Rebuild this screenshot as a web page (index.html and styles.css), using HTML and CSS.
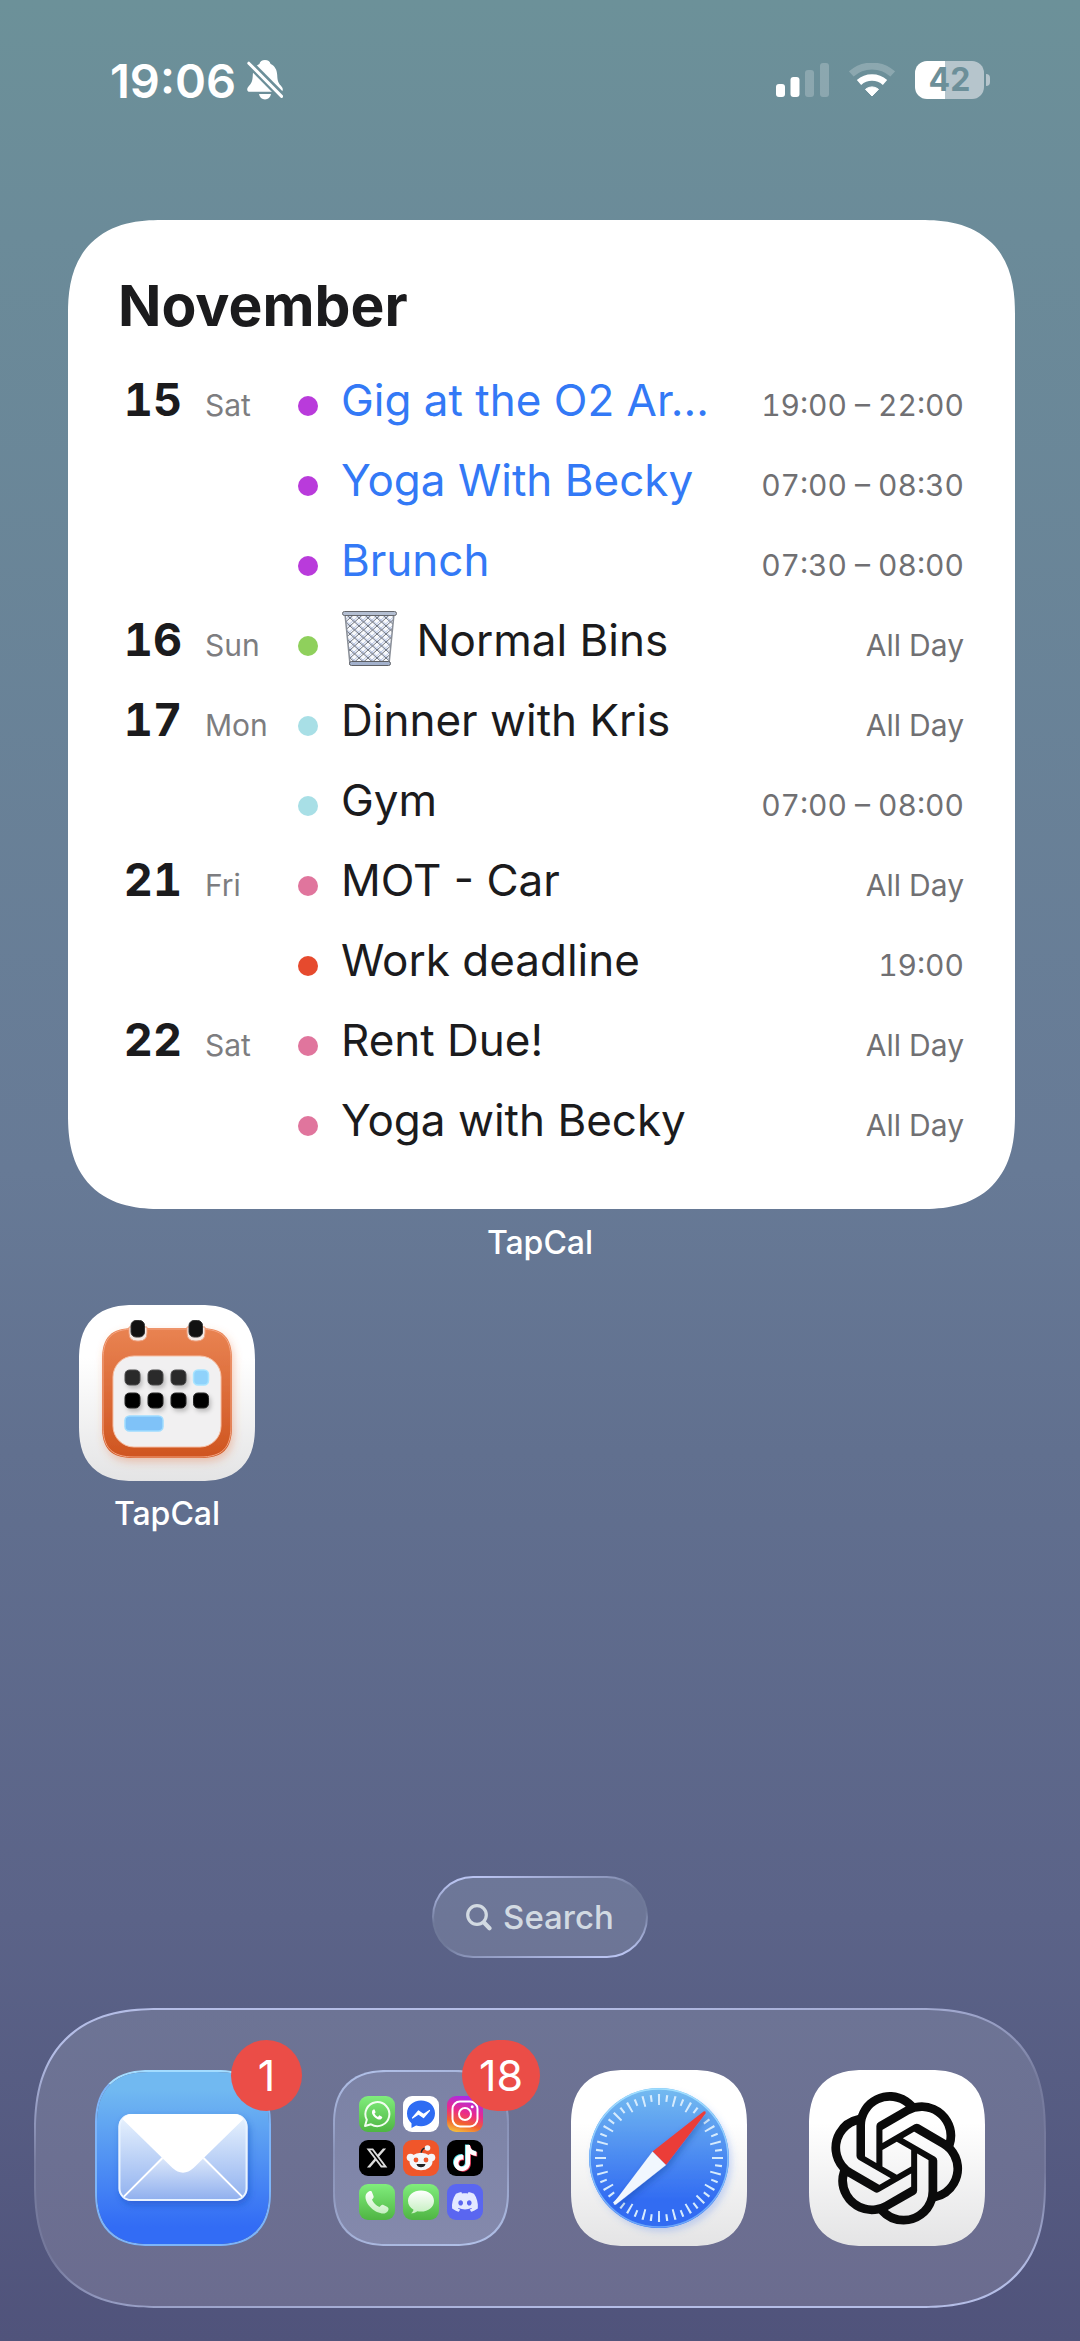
FILE: index.html
```html
<!DOCTYPE html>
<html lang="en">
<head>
    <meta charset="UTF-8">
    <meta name="viewport" content="width=device-width, initial-scale=1">
    <title>Home Screen</title>
    <link rel="stylesheet" href="styles.css">
</head>
<body>
    <header class="status-bar">
        <div class="status-left">
            <time class="clock">19:06</time>
            <svg class="bell" width="36" height="40" viewBox="0 0 36 40" aria-label="Silent mode">
                <defs>
                    <mask id="bell-mask">
                        <rect width="36" height="40" fill="#fff"/>
                        <path d="M-2 -1 L38 39.500" stroke="#000" stroke-width="8"/>
                    </mask>
                </defs>
                <g mask="url(#bell-mask)" fill="#fff">
                    <path d="M18 0c-3 0-5 1.600-5.600 4C8 6 6 10 5.800 15c-.2 6-1.200 8-3.300 10.200C1 26.800.2 28 .2 29.500c0 1.400 1 2.300 2.600 2.300h30.400c1.600 0 2.600-.9 2.600-2.300 0-1.500-.8-2.700-2.300-4.300-2.100-2.200-3.100-4.200-3.300-10.200C30 10 28 6 23.600 4 23 1.600 21 0 18 0z"/>
                    <path d="M12 34h12c-.6 3.300-2.800 5.400-6 5.400s-5.400-2.100-6-5.400z"/>
                </g>
                <path d="M1.800 3.200 L34.600 36.400" stroke="#fff" stroke-width="3" stroke-linecap="round"/>
            </svg>
        </div>
        <div class="status-right">
            <svg width="53" height="34" viewBox="0 0 53 34" fill="#fff" aria-label="Signal">
                <rect x="0" y="21" width="9" height="13" rx="3"/>
                <rect x="14.500" y="14" width="9" height="20" rx="3"/>
                <rect x="29" y="7" width="9" height="27" rx="3" opacity=".22"/>
                <rect x="44" y="0" width="9" height="34" rx="3" opacity=".22"/>
            </svg>
            <svg width="46" height="34" viewBox="0 0 46 34" fill="none" stroke="#fff" aria-label="Wi-Fi">
                <path d="M2.300 11a31 31 0 0 1 41.400 0" stroke-width="7" opacity=".22"/>
                <path d="M10 19.500a19.500 19.500 0 0 1 26 0" stroke-width="6.500"/>
                <path d="M16.500 26.300a10 10 0 0 1 13 0L23 33z" fill="#fff" stroke-width="1" stroke-linejoin="round"/>
            </svg>
            <div class="battery"><span class="battery-body">42</span><span class="battery-tip"></span></div>
        </div>
    </header>

    <main>
        <section class="widget">
            <h1>November</h1>
            <ul class="agenda">
                <li>
                    <span class="day">15</span><span class="weekday">Sat</span>
                    <span class="dot purple"></span><span class="title blue">Gig at the O2 Ar...</span><span class="time">19:00 – 22:00</span>
                </li>
                <li>
                    <span class="dot purple"></span><span class="title blue">Yoga With Becky</span><span class="time">07:00 – 08:30</span>
                </li>
                <li>
                    <span class="dot purple"></span><span class="title blue">Brunch</span><span class="time">07:30 – 08:00</span>
                </li>
                <li>
                    <span class="day">16</span><span class="weekday">Sun</span>
                    <span class="dot green"></span>
                    <span class="title">
                        <svg class="bin" width="57" height="57" viewBox="0 0 57 57" aria-hidden="true">
                            <defs>
                                <pattern id="wire" width="9" height="8" patternUnits="userSpaceOnUse">
                                    <path d="M0 0L9 8M9 0L0 8" stroke="#6e7480" stroke-width="1" fill="none"/>
                                </pattern>
                                <pattern id="wire-back" width="9" height="8" patternUnits="userSpaceOnUse" x="4" y="2">
                                    <path d="M0 0L9 8M9 0L0 8" stroke="#b9c6e4" stroke-width="1" fill="none"/>
                                </pattern>
                            </defs>
                            <path d="M4 4h49l-5 50H9z" fill="#f8f9fb"/>
                            <path d="M4 4h49l-5 50H9z" fill="url(#wire-back)"/>
                            <path d="M4 4h49l-5 50H9z" fill="url(#wire)" stroke="#8a8f98" stroke-width="1.500"/>
                            <rect x="1.500" y="1.500" width="54" height="4" rx="2" fill="#b4bfd2" stroke="#65676c" stroke-width="1"/>
                            <rect x="8.500" y="51.500" width="41" height="4" rx="2" fill="#a3b1cc" stroke="#5e6065" stroke-width="1"/>
                        </svg>
                        Normal Bins
                    </span>
                    <span class="time">All Day</span>
                </li>
                <li>
                    <span class="day">17</span><span class="weekday">Mon</span>
                    <span class="dot cyan"></span><span class="title">Dinner with Kris</span><span class="time">All Day</span>
                </li>
                <li>
                    <span class="dot cyan"></span><span class="title">Gym</span><span class="time">07:00 – 08:00</span>
                </li>
                <li>
                    <span class="day">21</span><span class="weekday">Fri</span>
                    <span class="dot pink"></span><span class="title">MOT - Car</span><span class="time">All Day</span>
                </li>
                <li>
                    <span class="dot red"></span><span class="title">Work deadline</span><span class="time">19:00</span>
                </li>
                <li>
                    <span class="day">22</span><span class="weekday">Sat</span>
                    <span class="dot pink"></span><span class="title">Rent Due!</span><span class="time">All Day</span>
                </li>
                <li>
                    <span class="dot pink"></span><span class="title">Yoga with Becky</span><span class="time">All Day</span>
                </li>
            </ul>
        </section>
        <p class="label widget-label">TapCal</p>

        <div class="app-grid">
            <button class="app" type="button">
                <svg class="icon" viewBox="0 0 176 176" aria-hidden="true">
                    <defs>
                        <linearGradient id="paper" x2="0" y2="1"><stop offset=".3" stop-color="#fff"/><stop offset="1" stop-color="#e4e4e5"/></linearGradient>
                        <linearGradient id="orange" x2="0" y2="1"><stop offset="0" stop-color="#e98352"/><stop offset="1" stop-color="#cf5520"/></linearGradient>
                        <filter id="glow" x="-20%" y="-20%" width="140%" height="150%"><feDropShadow dx="2" dy="4" stdDeviation="4" flood-color="#e8733c" flood-opacity=".35"/></filter>
                        <filter id="soft" x="-20%" y="-20%" width="150%" height="150%"><feDropShadow dx="2" dy="3" stdDeviation="2" flood-color="#000" flood-opacity=".22"/></filter>
                    </defs>
                    <rect width="176" height="176" fill="url(#paper)"/>
                    <path filter="url(#glow)" fill="url(#orange)" d="M55 23h66c23 0 32 9 32 32v66c0 23-9 32-32 32H55c-23 0-32-9-32-32V55c0-23 9-32 32-32z"/>
                    <path fill="none" stroke="#f3a583" stroke-width="1" d="M55 24h66c22 0 31 9 31 31v66c0 22-9 31-31 31H55c-22 0-31-9-31-31V55c0-22 9-31 31-31z"/>
                    <rect x="34" y="51" width="108" height="91" rx="21" fill="#f1f0f1" stroke="#f6c0a6" stroke-width="1"/>
                    <path d="M50 22v6q0 8 8 8h2q8 0 8-8v-6zM108 22v6q0 8 8 8h2q8 0 8-8v-6z" fill="#f4ebe7" stroke="#ef9f7c" stroke-width="1"/>
                    <g fill="#111" stroke="#333" stroke-width="1">
                        <rect x="52" y="15.500" width="13.500" height="16.500" rx="5"/>
                        <rect x="110" y="15.500" width="13.500" height="16.500" rx="5"/>
                    </g>
                    <g filter="url(#soft)">
                        <g fill="#2a2a2b" stroke="#4a4a4b" stroke-width="1">
                            <rect x="46" y="65" width="15" height="15" rx="4.500"/><rect x="69" y="65" width="15" height="15" rx="4.500"/><rect x="92" y="65" width="15" height="15" rx="4.500"/>
                        </g>
                        <g fill="#020202" stroke="#232323" stroke-width="1">
                            <rect x="46" y="88" width="15" height="15" rx="4.500"/><rect x="69" y="88" width="15" height="15" rx="4.500"/><rect x="92" y="88" width="15" height="15" rx="4.500"/><rect x="114.500" y="88" width="15" height="15" rx="4.500"/>
                        </g>
                    </g>
                    <rect x="114.500" y="65" width="15" height="15" rx="4.500" fill="#8fd2fb" stroke="#a8e4ff" stroke-width="1.500"/>
                    <rect x="46" y="111" width="38" height="15" rx="4.500" fill="#7fc2f8" stroke="#9fdcff" stroke-width="1.500"/>
                </svg>
                <span class="label">TapCal</span>
            </button>
        </div>
    </main>

    <button class="search" type="button">
        <svg width="26" height="27" viewBox="0 0 26 27" fill="none" stroke="#d2dae2" aria-hidden="true">
            <circle cx="11" cy="11" r="9.300" stroke-width="3.200"/>
            <path d="M18 18.500l5.500 5.800" stroke-width="4.200" stroke-linecap="round"/>
        </svg>
        Search
    </button>

    <nav class="dock">
        <button class="dock-item" type="button" aria-label="Mail">
            <svg class="icon mail" viewBox="0 0 176 176" aria-hidden="true">
                <defs>
                    <linearGradient id="sky" x2="0" y2="1"><stop offset=".1" stop-color="#71b9f1"/><stop offset=".9" stop-color="#326cf5"/></linearGradient>
                    <linearGradient id="rim" x2="0" y2="1"><stop offset="0" stop-color="#a3e0ff"/><stop offset="1" stop-color="#6aa6fa"/></linearGradient>
                    <linearGradient id="letter" x2="0" y2="1"><stop offset="0" stop-color="#eaf4fe"/><stop offset="1" stop-color="#8fb0ef"/></linearGradient>
                    <linearGradient id="pocket" x2="0" y2="1"><stop offset="0" stop-color="#dbe7fa"/><stop offset="1" stop-color="#8eaeee"/></linearGradient>
                    <filter id="mail-shadow" x="-20%" y="-20%" width="140%" height="150%"><feDropShadow dx="2" dy="4" stdDeviation="4" flood-color="#1546b8" flood-opacity=".45"/></filter>
                </defs>
                <rect width="176" height="176" fill="url(#sky)"/>
                <rect filter="url(#mail-shadow)" x="22" y="43" width="132" height="89" rx="13" fill="url(#letter)"/>
                <path d="M27 128L66 88h44l39 40q-3 4-8 4H35q-5 0-8-4z" fill="url(#pocket)"/>
                <path d="M27 128L67 88M149 128L109 88" stroke="#fff" stroke-width="2" fill="none"/>
                <rect x="23" y="44" width="130" height="87" rx="12" fill="none" stroke="#e9f3ff" stroke-width="2"/>
                <path d="M26 48q4-5 10-5h104q6 0 10 5L99 98q-11 10-22 0z" fill="#fff"/>
            </svg>
            <span class="badge">1</span>
        </button>

        <button class="dock-item" type="button" aria-label="Folder">
            <span class="icon folder">
                <svg viewBox="0 0 36 36">
                    <defs>
                        <linearGradient id="leaf" x2="0" y2="1"><stop offset="0" stop-color="#80ed7c"/><stop offset="1" stop-color="#4fb543"/></linearGradient>
                        <linearGradient id="insta" x1=".6" y1="0" x2=".3" y2="1"><stop offset="0" stop-color="#a52bf0"/><stop offset=".45" stop-color="#ea2a8b"/><stop offset=".75" stop-color="#f2622f"/><stop offset="1" stop-color="#f4b93b"/></linearGradient>
                        <linearGradient id="bubble" x2="0" y2="1"><stop offset="0" stop-color="#fff"/><stop offset="1" stop-color="#c4efbf"/></linearGradient>
                    </defs>
                    <rect width="36" height="36" fill="url(#leaf)"/>
                    <path d="M6 30l1.800-6.200A12 12 0 1 1 12 28.300z" fill="none" stroke="#f1fdf0" stroke-width="2" stroke-linejoin="round"/>
                    <path transform="translate(9.500 9.500) scale(.69)" fill="#fff" d="M8.500 5.500c-1.500 0-3.500 1.500-3.500 4.500 0 3.500 5.500 9.500 10 10.200 3 .4 5-1.500 5-3.700l-4.300-2.300-2 2.300c-2.200-.8-4.200-2.800-5-4.800l1.700-1.900z"/>
                </svg>
                <svg viewBox="0 0 36 36">
                    <rect width="36" height="36" fill="#fff"/>
                    <path d="M18 4.500C10 4.500 4 10 4 17.500c0 4 1.800 7.400 4.500 9.700V32l4.600-2.500c1.500.4 3.200.7 4.900.7 8 0 14-5.500 14-12.900S26 4.500 18 4.500z" fill="#2f6cf3"/>
                    <path d="M9.500 22l6-7 5 3.500 6-4-6 7-5-3.500z" fill="#fff" stroke="#fff" stroke-width="1.200" stroke-linejoin="round"/>
                </svg>
                <svg viewBox="0 0 36 36">
                    <rect width="36" height="36" fill="url(#insta)"/>
                    <g fill="none" stroke="#fff" stroke-width="2">
                        <rect x="5.500" y="5.500" width="25" height="25" rx="7.500"/>
                        <circle cx="18" cy="18" r="6"/>
                    </g>
                    <circle cx="25.200" cy="10.800" r="1.500" fill="#fff"/>
                </svg>
                <svg viewBox="0 0 36 36">
                    <rect width="36" height="36" fill="#000"/>
                    <path transform="translate(7.500 7.500) scale(.87)" fill="#dcdcdc" d="M18.901 1.153h3.680l-8.040 9.190L24 22.846h-7.406l-5.800-7.584-6.638 7.584H.474l8.600-9.830L0 1.154h7.594l5.243 6.932ZM17.610 20.644h2.039L6.486 3.240H4.298Z"/>
                </svg>
                <svg viewBox="0 0 36 36">
                    <rect width="36" height="36" fill="#f0562a"/>
                    <path d="M18 14q.5-6 5-6" fill="none" stroke="#222" stroke-width="1.500"/>
                    <g fill="#f4f6f8">
                        <circle cx="24.500" cy="8" r="2.800"/>
                        <circle cx="7.500" cy="17.500" r="3.800"/>
                        <circle cx="28.500" cy="17.500" r="3.800"/>
                        <ellipse cx="18" cy="21.500" rx="11.500" ry="8.800"/>
                    </g>
                    <circle cx="13" cy="20" r="2.400" fill="#f0562a"/>
                    <circle cx="23" cy="20" r="2.400" fill="#f0562a"/>
                    <path d="M13.500 24h9q-.8 3.200-4.500 3.200T13.500 24z" fill="#222"/>
                </svg>
                <svg viewBox="0 0 36 36">
                    <rect width="36" height="36" fill="#000"/>
                    <defs>
                        <path id="note" d="M12.525.020c1.310-.020 2.610-.010 3.910-.020.080 1.530.630 3.090 1.750 4.170 1.120 1.110 2.700 1.620 4.240 1.790v4.030c-1.440-.050-2.890-.350-4.200-.970-.570-.260-1.100-.590-1.620-.930-.010 2.920.010 5.840-.020 8.750-.080 1.400-.540 2.790-1.350 3.940-1.310 1.920-3.580 3.170-5.910 3.210-1.430.080-2.860-.310-4.080-1.030-2.020-1.190-3.440-3.370-3.650-5.710-.020-.500-.030-1-.010-1.490.180-1.900 1.120-3.720 2.580-4.960 1.660-1.440 3.980-2.130 6.150-1.720.020 1.480-.040 2.960-.040 4.440-.990-.320-2.150-.230-3.020.370-.630.410-1.110 1.040-1.360 1.750-.210.510-.150 1.070-.140 1.610.240 1.640 1.820 3.020 3.500 2.870 1.120-.010 2.190-.660 2.770-1.610.190-.330.400-.670.410-1.060.100-1.790.060-3.570.070-5.360.010-4.030-.010-8.050.020-12.070z"/>
                    </defs>
                    <use href="#note" transform="translate(4.400 4.400) scale(1.080)" fill="#58e6ec"/>
                    <use href="#note" transform="translate(6 5.800) scale(1.080)" fill="#ee3a5b"/>
                    <use href="#note" transform="translate(5.200 5.100) scale(1.080)" fill="#fff"/>
                </svg>
                <svg viewBox="0 0 36 36">
                    <rect width="36" height="36" fill="url(#leaf)"/>
                    <path d="M11.500 7c-2 0-5 2.500-5 6 0 7.500 9.500 16.500 18 16.500 3 0 5-2.500 5-4.500 0-1-.5-1.500-1.500-2.200L24.500 21c-1-.6-1.800-.4-2.500.4L20.500 23c-3.500-1.500-6-4-7.500-7.300l1.200-1.500c.6-.8.6-1.500.2-2.400L13 8.200C12.700 7.400 12.300 7 11.500 7z" fill="url(#bubble)"/>
                </svg>
                <svg viewBox="0 0 36 36">
                    <rect width="36" height="36" fill="url(#leaf)"/>
                    <path d="M18 6.500C10.500 6.500 5 11 5 17c0 3.800 2.200 6.800 5.500 8.700-.2 1.600-1.200 2.800-2.700 3.600 2.700.1 5-.8 6.500-2.100 1.200.3 2.400.4 3.700.4 7.500 0 13-4.600 13-10.600S25.500 6.500 18 6.500z" fill="url(#bubble)"/>
                </svg>
                <svg viewBox="0 0 36 36">
                    <rect width="36" height="36" fill="#5a66f0"/>
                    <path transform="translate(5 5) scale(1.080)" fill="#e3e9ff" d="M20.317 4.370a19.791 19.791 0 0 0-4.885-1.515.074.074 0 0 0-.079.037c-.211.375-.445.865-.608 1.250-1.845-.276-3.680-.276-5.487 0-.164-.393-.406-.874-.618-1.250a.077.077 0 0 0-.079-.037 19.736 19.736 0 0 0-4.885 1.515.070.070 0 0 0-.032.028C.533 9.046-.319 13.580.099 18.058a.082.082 0 0 0 .031.056c2.053 1.508 4.041 2.423 5.993 3.029a.078.078 0 0 0 .084-.028c.462-.630.873-1.295 1.226-1.994a.076.076 0 0 0-.042-.106c-.653-.248-1.274-.550-1.872-.892a.077.077 0 0 1-.008-.128c.126-.094.252-.192.372-.291a.074.074 0 0 1 .078-.011c3.928 1.793 8.180 1.793 12.061 0a.074.074 0 0 1 .079.010c.120.099.246.198.373.292a.077.077 0 0 1-.007.128 12.299 12.299 0 0 1-1.873.891.077.077 0 0 0-.041.107c.360.698.772 1.363 1.225 1.993a.076.076 0 0 0 .084.029c1.961-.607 3.950-1.522 6.002-3.029a.077.077 0 0 0 .031-.055c.500-5.177-.838-9.674-3.549-13.660a.061.061 0 0 0-.031-.029zM8.020 15.331c-1.183 0-2.157-1.086-2.157-2.419 0-1.333.956-2.419 2.157-2.419 1.211 0 2.176 1.095 2.157 2.419 0 1.333-.956 2.419-2.157 2.419zm7.975 0c-1.183 0-2.157-1.086-2.157-2.419 0-1.333.955-2.419 2.157-2.419 1.211 0 2.176 1.095 2.157 2.419 0 1.333-.946 2.419-2.157 2.419Z"/>
                </svg>
            </span>
            <span class="badge">18</span>
        </button>

        <button class="dock-item" type="button" aria-label="Safari">
            <svg class="icon" viewBox="0 0 176 176" aria-hidden="true">
                <defs>
                    <linearGradient id="steel" x2="0" y2="1"><stop offset="0" stop-color="#74bbf0"/><stop offset=".8" stop-color="#326cf2"/></linearGradient>
                    <filter id="dial-shadow" x="-20%" y="-20%" width="150%" height="150%"><feDropShadow dx="3" dy="4" stdDeviation="3" flood-color="#4a7cf0" flood-opacity=".25"/></filter>
                    <filter id="needle-shadow" x="-20%" y="-20%" width="150%" height="150%"><feDropShadow dx="2" dy="3" stdDeviation="3" flood-color="#10308a" flood-opacity=".35"/></filter>
                </defs>
                <rect width="176" height="176" fill="url(#paper)"/>
                <circle filter="url(#dial-shadow)" cx="88" cy="88" r="70" fill="url(#steel)"/>
                <circle cx="88" cy="88" r="69" fill="none" stroke="url(#rim)" stroke-width="1.500"/>
                <g fill="none" stroke="#d6ebfd">
                    <circle cx="88" cy="88" r="58.500" stroke-width="11" pathLength="360" stroke-dasharray="2 13" stroke-dashoffset="1"/>
                    <circle cx="88" cy="88" r="60" stroke-width="7" pathLength="360" stroke-dasharray="2 13" stroke-dashoffset="8.500"/>
                </g>
                <g filter="url(#needle-shadow)">
                    <path d="M81.500 81.500L132.500 41.500q3-1 2 2L95 95z" fill="#eb3d39"/>
                    <path d="M81.500 81.500L43 132.500q-1 3 2 2L95 95z" fill="#f1f7fe"/>
                </g>
            </svg>
        </button>

        <button class="dock-item" type="button" aria-label="ChatGPT">
            <svg class="icon" viewBox="0 0 176 176" aria-hidden="true">
                <rect width="176" height="176" fill="url(#paper)"/>
                <path transform="translate(21.500 22) scale(5.520)" fill="#0b0b0b" d="M22.2819 9.8211a5.9847 5.9847 0 0 0-.5157-4.9108 6.0462 6.0462 0 0 0-6.5098-2.9A6.0651 6.0651 0 0 0 4.9807 4.1818a5.9847 5.9847 0 0 0-3.9977 2.9 6.0462 6.0462 0 0 0 .7427 7.0966 5.98 5.98 0 0 0 .511 4.9107 6.051 6.051 0 0 0 6.5146 2.9001A5.9847 5.9847 0 0 0 13.2599 24a6.0557 6.0557 0 0 0 5.7718-4.2058 5.9894 5.9894 0 0 0 3.9977-2.9001 6.0557 6.0557 0 0 0-.7475-7.0729zm-9.022 12.6081a4.4755 4.4755 0 0 1-2.8764-1.0408l.1419-.0804 4.7783-2.7582a.7948.7948 0 0 0 .3927-.6813v-6.7369l2.02 1.1686a.071.071 0 0 1 .038.052v5.5826a4.504 4.504 0 0 1-4.4945 4.4944zm-9.6607-4.1254a4.4708 4.4708 0 0 1-.5346-3.0137l.142.0852 4.783 2.7582a.7712.7712 0 0 0 .7806 0l5.8428-3.3685v2.3324a.0804.0804 0 0 1-.0332.0615L9.74 19.9502a4.4992 4.4992 0 0 1-6.1408-1.6464zM2.3408 7.8956a4.485 4.485 0 0 1 2.3655-1.9728V11.6a.7664.7664 0 0 0 .3879.6765l5.8144 3.3543-2.0201 1.1685a.0757.0757 0 0 1-.071 0l-4.8303-2.7865A4.504 4.504 0 0 1 2.3408 7.872zm16.5963 3.8558L13.1038 8.364 15.1192 7.2a.0757.0757 0 0 1 .071 0l4.8303 2.7913a4.4944 4.4944 0 0 1-.6765 8.1042v-5.6772a.79.79 0 0 0-.407-.667zm2.0107-3.0231l-.142-.0852-4.7735-2.7818a.7759.7759 0 0 0-.7854 0L9.409 9.2297V6.8974a.0662.0662 0 0 1 .0284-.0615l4.8303-2.7866a4.4992 4.4992 0 0 1 6.6802 4.66zM8.3065 12.863l-2.02-1.1638a.0804.0804 0 0 1-.038-.0567V6.0742a4.4992 4.4992 0 0 1 7.3757-3.4537l-.142.0805L8.704 5.459a.7948.7948 0 0 0-.3927.6813zm1.0976-2.3654l2.602-1.4998 2.6069 1.4998v2.9994l-2.5974 1.4997-2.6067-1.4997Z"/>
            </svg>
        </button>
    </nav>
</body>
</html>
```
FILE: styles.css
```css
* {
    box-sizing: border-box;
}
body {
    margin: 0;
    min-height: 100vh;
    display: flex;
    flex-direction: column;
    background: linear-gradient(to bottom, #6c9199 0%, #6b8b99 10%, #677a96 50%, #61708f 62%, #5b6388 82%, #50537b 100%);
    font-family: Inter, "Liberation Sans", sans-serif;
    color: #1b1b1d;
}
button {
    font: inherit;
    color: inherit;
    padding: 0;
    border: none;
    background: none;
    cursor: pointer;
}

/* status bar */
.status-bar {
    display: flex;
    justify-content: space-between;
    align-items: center;
    height: 160px;
    padding: 0 90px 0 110px;
    color: white;
}
.status-left {
    display: flex;
    align-items: center;
    gap: 11px;
}
.clock {
    font-size: 47px;
    font-weight: 600;
}
.status-right {
    display: flex;
    align-items: center;
    gap: 20px;
}
.battery {
    display: flex;
    align-items: center;
    gap: 2px;
}
.battery-body {
    width: 69px;
    height: 38px;
    border-radius: 12px;
    background: linear-gradient(to right, #fff 43%, #b6c5cc 43%);
    color: #6c8f99;
    font-size: 32px;
    font-weight: 700;
    line-height: 38px;
    text-align: center;
}
.battery-tip {
    width: 4px;
    height: 12px;
    border-radius: 0 4px 4px 0;
    background: #b6c5cc;
}

/* calendar widget */
.widget {
    margin: 60px 65px 0 68px;
    padding: 56px 51px 49px 50px;
    background: white;
    border-radius: 80px;
}
h1 {
    margin: 0 0 24px;
    font-size: 57px;
    line-height: 60px;
    font-weight: 700;
}
.agenda {
    list-style: none;
    margin: 0;
    padding: 0;
}
.agenda li {
    display: grid;
    grid-template-columns: 64px 116px 20px minmax(0, 1fr) auto;
    align-items: baseline;
    height: 80px;
    line-height: 80px;
}
.day {
    grid-column: 1;
    font-size: 45px;
    font-weight: 700;
    font-variant-numeric: tabular-nums;
    text-align: right;
}
.weekday {
    grid-column: 2;
    padding-left: 23px;
    font-size: 30px;
    color: #7d7d80;
}
.dot {
    grid-column: 3;
    width: 20px;
    height: 20px;
    border-radius: 50%;
}
.title {
    grid-column: 4;
    padding-left: 23px;
    font-size: 44px;
    white-space: nowrap;
    overflow: hidden;
    text-overflow: ellipsis;
}
.time {
    grid-column: 5;
    padding-left: 24px;
    font-size: 30px;
    font-variant-numeric: tabular-nums;
    color: #707073;
    white-space: nowrap;
}
.bin {
    margin-right: 6px;
    vertical-align: -11px;
}
.blue { color: #3379f6; }
.purple { background: #b93bdb; }
.green { background: #8fd05c; }
.cyan { background: #a8dfe6; }
.pink { background: #e0759d; }
.red { background: #e64a2e; }

/* apps */
.label {
    font-size: 32px;
    line-height: 40px;
    font-weight: 500;
    color: white;
    text-align: center;
}
.widget-label {
    margin: 14px 0 0;
}
.app-grid {
    display: grid;
    grid-template-columns: repeat(4, 176px);
    justify-content: space-between;
    padding: 42px 79px 0;
}
.app {
    display: flex;
    flex-direction: column;
    align-items: center;
    gap: 13px;
}
.icon {
    display: block;
    width: 176px;
    height: 176px;
    border-radius: 48px;
    overflow: hidden;
}
.mail {
    border: 2px solid #7db4f8;
    border-top-color: #a3dcff;
}

/* search pill */
.search {
    display: flex;
    align-items: center;
    gap: 11px;
    height: 82px;
    margin: auto auto 50px;
    padding: 0 32px;
    border: 2px solid transparent;
    border-radius: 41px;
    background:
        linear-gradient(#6d7798, #6d7596) padding-box,
        linear-gradient(170deg, #b9c3f0 8%, #6f7999 40%, #6f7999 60%, #b9c3f0 92%) border-box;
    color: #d2dae2;
    font-size: 33px;
    font-weight: 500;
}

/* dock */
.dock {
    display: flex;
    justify-content: space-between;
    margin: 0 34px 33px;
    padding: 60px 59px;
    border: 2px solid transparent;
    border-radius: 110px;
    background:
        linear-gradient(#6d7495, #6b6c8f) padding-box,
        linear-gradient(175deg, #b4bde6 12%, #777c9e 40%, #74789b 65%, #b4bde6 90%) border-box;
}
.dock-item {
    position: relative;
}
.badge {
    position: absolute;
    top: -30px;
    right: -31px;
    min-width: 71px;
    height: 71px;
    padding: 0 17px;
    border-radius: 36px;
    background: #eb4d47;
    color: white;
    font-size: 43px;
    line-height: 71px;
    text-align: center;
}
.folder {
    display: grid;
    grid-template-columns: repeat(3, 36px);
    grid-auto-rows: 36px;
    gap: 8px;
    padding: 24px;
    border: 2px solid transparent;
    background:
        linear-gradient(#7b82a5, #8489ac) padding-box,
        linear-gradient(170deg, #b4c4ec, #8a93b8 40%, #9099be 60%, #b4c4ec) border-box;
}
.folder svg {
    width: 36px;
    height: 36px;
    border-radius: 9px;
}

/* smoother corners where the browser can draw them */
@supports (corner-shape: superellipse(1.3)) {
    .widget, .icon, .dock {
        corner-shape: superellipse(1.3);
    }
    .widget {
        border-radius: 94px;
    }
    .icon {
        border-radius: 55px;
    }
    .dock {
        border-radius: 125px;
    }
}
```
